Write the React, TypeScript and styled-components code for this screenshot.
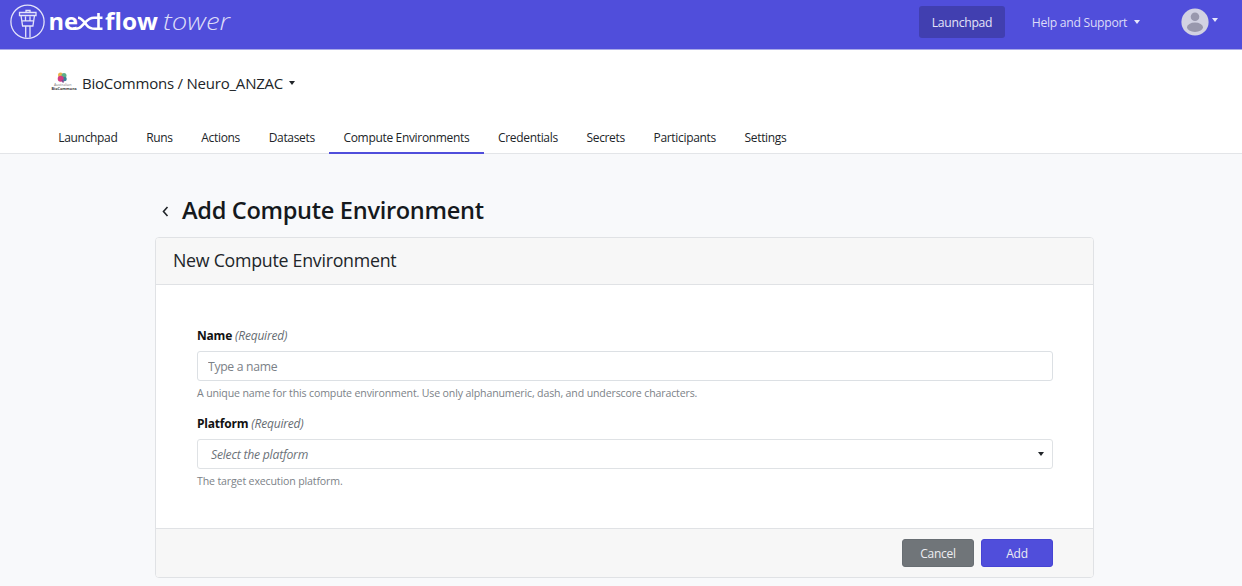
import React from 'react';
import styled, { createGlobalStyle } from 'styled-components';

const Global = createGlobalStyle`
  * { box-sizing: border-box; }
  body {
    margin: 0;
    background: #f8f9fb;
    color: #212529;
    font-family: "Open Sans", "Noto Sans", sans-serif;
    font-size: 12.2px;
    overflow: hidden;
  }
  h1, h2 { margin: 0; }
  button, input { font-family: inherit; }
`;

const Page = styled.div`
  width: 1242px;
  height: 586px;
  overflow: hidden;
`;

const TopBar = styled.header`
  height: 50px;
  display: flex;
  align-items: flex-start;
  padding: 3px 24px 0 9px;
  background: #504edb;
  border-bottom: 1px solid #a9a9e8;
`;

const TopNav = styled.nav`
  display: flex;
  align-items: center;
  height: 37px;
  margin-left: auto;
`;

const TopLink = styled.a<{ $active?: boolean }>`
  display: flex;
  align-items: center;
  justify-content: center;
  height: 32px;
  width: ${(p) => (p.$active ? '86px' : '108px')};
  margin-right: ${(p) => (p.$active ? '27px' : '41px')};
  padding-top: 1px;
  gap: 7px;
  border-radius: 3px;
  letter-spacing: -0.3px;
  white-space: nowrap;
  color: ${(p) => (p.$active ? '#e4e4f8' : '#dddcf8')};
  background: ${(p) => (p.$active ? '#413fb0' : 'transparent')};
`;

const Caret = styled.span<{ $color?: string }>`
  flex: none;
  border: 3.5px solid transparent;
  border-top: 4px solid ${(p) => p.$color ?? '#212529'};
  border-bottom: 0;
`;

const UserMenu = styled.div`
  display: flex;
  align-items: center;
  gap: 3px;
  ${Caret} { margin-bottom: 3px; }
`;

const SubHeader = styled.section`
  height: 104px;
  background: #fff;
  border-bottom: 1px solid #e3e5e8;
  display: flex;
  flex-direction: column;
  justify-content: space-between;
`;

const Workspace = styled.div`
  display: flex;
  align-items: center;
  height: 28px;
  margin: 19px 0 0 51px;
  font-size: 15px;
  letter-spacing: -0.22px;
  white-space: nowrap;
`;

const WorkspaceName = styled.span`
  margin: 0 6px 0 6px;
`;

const Tabs = styled.nav`
  display: flex;
  height: 34px;
  margin: 0 0 -1px 44px;
`;

const Tab = styled.a<{ $active?: boolean }>`
  padding: 9px 14.4px 0 14.3px;
  line-height: 18px;
  font-size: 12px;
  letter-spacing: -0.33px;
  white-space: nowrap;
  border-bottom: 2px solid ${(p) => (p.$active ? '#504edb' : 'transparent')};
`;

const Main = styled.main`
  width: 939px;
  margin-left: 155px;
  padding-top: 38px;
`;

const TitleRow = styled.div`
  display: flex;
  align-items: center;
  height: 38px;
  margin-bottom: 7px;
  padding-left: 6px;
`;

const Title = styled.h1`
  margin: -2px 0 0 13px;
  font-size: 23.6px;
  font-weight: 600;
  color: #15191d;
  letter-spacing: -0.32px;
  white-space: nowrap;
`;

const Card = styled.section`
  height: 341px;
  display: flex;
  flex-direction: column;
  border: 1px solid #e0e2e5;
  border-radius: 4px;
  background: #fff;
  overflow: hidden;
`;

const CardHeader = styled.h2`
  height: 47px;
  padding: 0 17px;
  line-height: 45px;
  font-size: 17.8px;
  font-weight: 400;
  letter-spacing: -0.27px;
  background: #f7f7f7;
  border-bottom: 1px solid #e0e2e5;
`;

const CardBody = styled.div`
  flex: 1;
  padding: 42px 40px 0 41px;
`;

const Field = styled.div`
  display: flex;
  flex-direction: column;
  height: 88px;
`;

const Label = styled.label`
  height: 18px;
  line-height: 18px;
  margin-bottom: 6px;
  font-size: 12px;
  letter-spacing: -0.2px;
  white-space: nowrap;
  b { color: #111; font-weight: 700; }
  i { color: #666c72; }
`;

const Input = styled.input`
  height: 30px;
  width: 100%;
  padding: 0 10px;
  border: 1px solid #dce0e4;
  border-radius: 3px;
  font-size: 12.2px;
  letter-spacing: -0.3px;
  &::placeholder { color: #7b8187; opacity: 1; }
`;

const Select = styled.div`
  display: flex;
  align-items: center;
  justify-content: space-between;
  height: 30px;
  padding: 0 8px 0 13px;
  border: 1px solid #dfe2e5;
  border-radius: 3px;
  color: #6c7278;
  font-style: italic;
  letter-spacing: -0.23px;
`;

const Help = styled.small`
  margin-top: 5px;
  line-height: 15px;
  font-size: 10.6px;
  letter-spacing: -0.15px;
  color: #7c8288;
  white-space: nowrap;
`;

const CardFooter = styled.footer`
  display: flex;
  justify-content: flex-end;
  gap: 7px;
  height: 49px;
  padding: 10px 40px 0;
  background: #f7f7f7;
  border-top: 1px solid #e0e2e5;
`;

const Button = styled.button<{ $primary?: boolean }>`
  width: 72px;
  height: 28px;
  padding: 1px 0 0;
  border: 1px solid ${(p) => (p.$primary ? '#4644d4' : '#686e73')};
  border-radius: 3px;
  color: #ededf2;
  font-size: 12px;
  letter-spacing: -0.3px;
  background: ${(p) => (p.$primary ? '#504edb' : '#707579')};
`;

const Logo = () => (
  <svg width="226" height="40" viewBox="9 3 226 40" fill="none">
    <g stroke="#e4e4fa" strokeWidth="1.3">
      <circle cx="27.5" cy="21.7" r="16.6" />
      <path d="M26 12.500v-2h4v2M19.500 12.500h16.500v3h-16.500zM21 15.500l1.600 10.500h10.300l1.600-10.500M22.500 20.800h10.500M25.500 16.500v4M30 16.500v4M25.700 26v11.500M30 26v11.500" />
    </g>
    <g fill="#fff" fontFamily="Open Sans, sans-serif" fontSize="24" fontWeight="700">
      <text x="48.5" y="30" textLength="29.500" lengthAdjust="spacingAndGlyphs">ne</text>
      <text x="105" y="30" textLength="53" lengthAdjust="spacingAndGlyphs">flow</text>
    </g>
    <g stroke="#fff" strokeWidth="2.600">
      <path d="M73 28.500C80 30 82 25.500 85 22.700C88 19.500 90 17.800 94 17.800h8.500" />
      <path d="M78 17.800C82 17.800 84 22 87 25.500C89 28 91 28.800 95 28.800h7.500" />
      <path d="M98.500 13v16" />
    </g>
    <text x="163" y="30" fill="#dddcf8" fontFamily="Open Sans, sans-serif" fontSize="24" fontWeight="300" fontStyle="italic" textLength="67" lengthAdjust="spacingAndGlyphs">tower</text>
  </svg>
);

const Avatar = () => (
  <svg width="28" height="28" viewBox="0 0 28 28">
    <circle cx="14" cy="14" r="13.600" fill="#d2d2e2" />
    <circle cx="14" cy="8.700" r="4.300" fill="#9998ad" />
    <ellipse cx="14" cy="19.200" rx="8" ry="4.700" fill="#9998ad" />
  </svg>
);

const OrgLogo = () => (
  <svg width="25" height="24" viewBox="0 0 25 24" overflow="visible">
    <circle cx="9.500" cy="4" r="2.500" fill="#e9b44c" />
    <circle cx="13" cy="4.500" r="2.500" fill="#5eae8b" />
    <circle cx="13.500" cy="8" r="2.300" fill="#377f98" />
    <circle cx="9.700" cy="7.700" r="3" fill="#d43c83" />
    <path d="M11 9l1.500 2.500" stroke="#7d4b91" strokeWidth="1.500" />
    <text x="3" y="15" fontFamily="Open Sans, sans-serif" fontSize="3.700" letterSpacing="0" fill="#777">Australian</text>
    <text x="0.500" y="18.500" fontFamily="Open Sans, sans-serif" fontSize="3.800" letterSpacing="0" fontWeight="700" fill="#333">BioCommons</text>
  </svg>
);

const tabs = ['Launchpad', 'Runs', 'Actions', 'Datasets', 'Compute Environments', 'Credentials', 'Secrets', 'Participants', 'Settings'];

export default function App() {
  return (
    <Page>
      <Global />
      <TopBar>
        <Logo />
        <TopNav>
          <TopLink $active>Launchpad</TopLink>
          <TopLink>Help and Support <Caret $color="#e8e8fc" /></TopLink>
          <UserMenu><Avatar /><Caret $color="#e8e8fc" /></UserMenu>
        </TopNav>
      </TopBar>
      <SubHeader>
        <Workspace>
          <OrgLogo />
          <WorkspaceName>BioCommons / Neuro_ANZAC</WorkspaceName>
          <Caret />
        </Workspace>
        <Tabs>
          {tabs.map((tab) => (
            <Tab key={tab} $active={tab === 'Compute Environments'}>{tab}</Tab>
          ))}
        </Tabs>
      </SubHeader>
      <Main>
        <TitleRow>
          <svg width="8" height="12" viewBox="0 0 8 12" fill="none" stroke="#212529" strokeWidth="1.600">
            <path d="M6.500 2L2.500 6.500l4 4.500" />
          </svg>
          <Title>Add Compute Environment</Title>
        </TitleRow>
        <Card>
          <CardHeader>New Compute Environment</CardHeader>
          <CardBody>
            <Field>
              <Label htmlFor="name"><b>Name</b> <i>(Required)</i></Label>
              <Input id="name" placeholder="Type a name" />
              <Help>A unique name for this compute environment. Use only alphanumeric, dash, and underscore characters.</Help>
            </Field>
            <Field>
              <Label><b>Platform</b> <i>(Required)</i></Label>
              <Select>Select the platform <Caret /></Select>
              <Help>The target execution platform.</Help>
            </Field>
          </CardBody>
          <CardFooter>
            <Button>Cancel</Button>
            <Button $primary>Add</Button>
          </CardFooter>
        </Card>
      </Main>
    </Page>
  );
}
